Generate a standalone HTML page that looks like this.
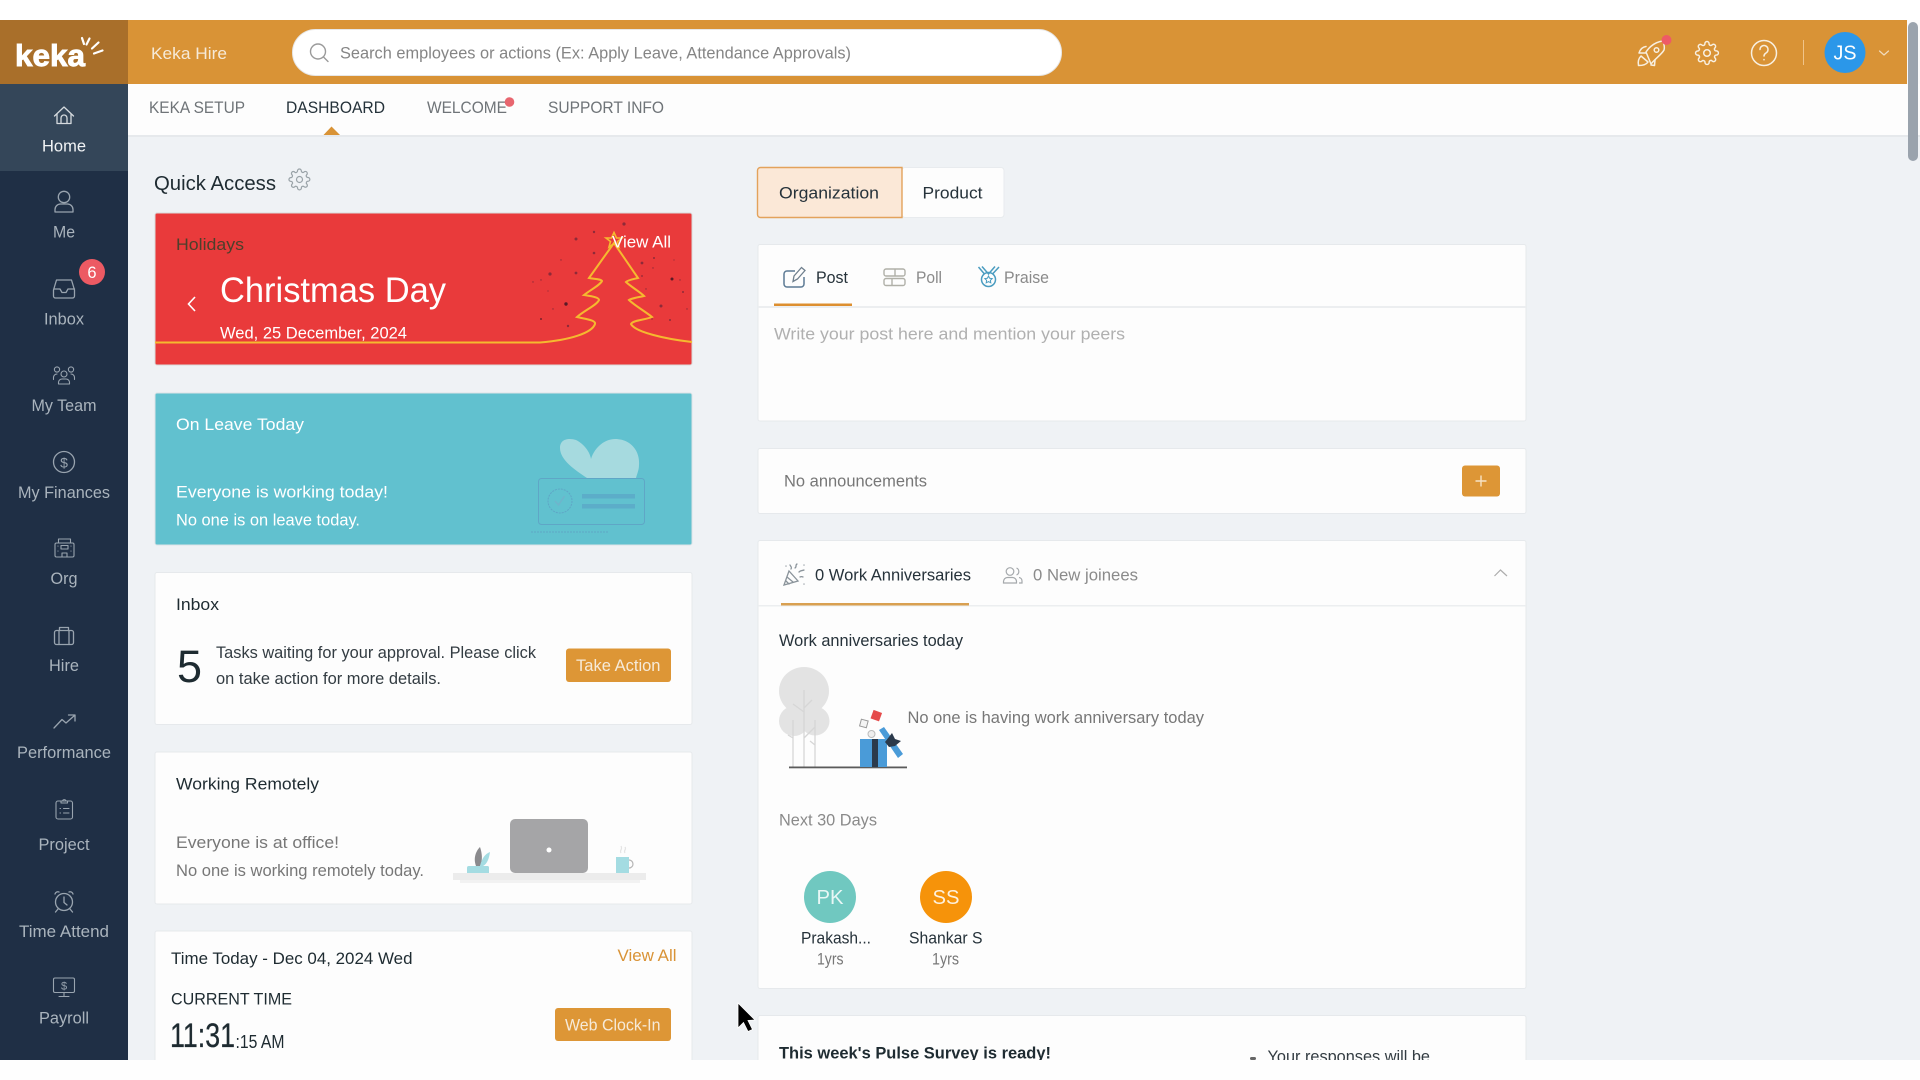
<!DOCTYPE html>
<html lang="en">
<head>
<meta charset="utf-8">
<title>Keka Dashboard</title>
<style>
html,body{margin:0;padding:0;background:#fff;width:1920px;height:1080px;overflow:hidden}
svg{display:block}
text{font-family:"Liberation Sans",sans-serif;font-size:16.5px;fill:#26323a}
.nav{fill:#aab4bd;text-anchor:middle}
.ic{fill:none;stroke:#99a4af;stroke-width:1.3;stroke-linecap:round;stroke-linejoin:round}
.g{fill:#777}
.w{fill:#fff}
.hw{fill:#f6ead8}
.tab{fill:#6f7478}
.st{fill:#8f2a38}
</style>
</head>
<body>
<svg xmlns="http://www.w3.org/2000/svg" width="1920" height="1080" viewBox="0 0 1920 1080">
<defs>
<path id="gear" d="M19.4 15a1.65 1.65 0 0 0 .33 1.82l.06.06a2 2 0 0 1 0 2.83 2 2 0 0 1-2.83 0l-.06-.06a1.65 1.65 0 0 0-1.82-.33 1.65 1.65 0 0 0-1 1.51V21a2 2 0 0 1-2 2 2 2 0 0 1-2-2v-.09A1.65 1.65 0 0 0 9 19.4a1.65 1.65 0 0 0-1.82.33l-.06.06a2 2 0 0 1-2.83 0 2 2 0 0 1 0-2.83l.06-.06a1.65 1.65 0 0 0 .33-1.82 1.65 1.65 0 0 0-1.51-1H3a2 2 0 0 1-2-2 2 2 0 0 1 2-2h.09A1.65 1.65 0 0 0 4.6 9a1.65 1.65 0 0 0-.33-1.82l-.06-.06a2 2 0 0 1 0-2.83 2 2 0 0 1 2.83 0l.06.06a1.65 1.65 0 0 0 1.82.33H9a1.65 1.65 0 0 0 1-1.51V3a2 2 0 0 1 2-2 2 2 0 0 1 2 2v.09a1.65 1.65 0 0 0 1 1.51 1.65 1.65 0 0 0 1.82-.33l.06-.06a2 2 0 0 1 2.83 0 2 2 0 0 1 0 2.83l-.06.06a1.65 1.65 0 0 0-.33 1.82V9a1.65 1.65 0 0 0 1.51 1H21a2 2 0 0 1 2 2 2 2 0 0 1-2 2h-.09a1.65 1.65 0 0 0-1.51 1z"/>
</defs>

<!-- page background -->
<rect x="0" y="20" width="1920" height="1040" fill="#eff2f5"/>

<!-- header -->
<rect x="128" y="20" width="1779" height="64" fill="#d99336"/>
<rect x="1907" y="20" width="13" height="115" fill="#fbfbfb"/>
<rect x="0" y="20" width="128" height="64" fill="#a96f2a"/>
<text x="15" y="66" class="w" style="font-size:31px;font-weight:700;stroke:#fff;stroke-width:.9" textLength="70" lengthAdjust="spacingAndGlyphs">keka</text>
<g stroke="#fff" stroke-width="2.200" stroke-linecap="round" fill="none">
<path d="M82 38L84 44"/><path d="M89.500 38.500L86.500 44.500"/><path d="M98.500 42.500L92 48.500"/><path d="M102.500 50.500L94 53.500"/>
</g>
<text x="151" y="59" class="hw" textLength="76" lengthAdjust="spacingAndGlyphs">Keka Hire</text>
<rect x="292.500" y="29.500" width="769" height="46" rx="23" fill="#fff" stroke="#e7e7e7"/>
<g fill="none" stroke="#9a9a9a" stroke-width="1.400" stroke-linecap="round"><circle cx="318" cy="51.500" r="7.500"/><path d="M323.500 57L328 61.500"/></g>
<text x="340" y="58.500" style="fill:#858585" textLength="511" lengthAdjust="spacingAndGlyphs">Search employees or actions (Ex: Apply Leave, Attendance Approvals)</text>

<!-- header right icons -->
<g fill="none" stroke="#f8efe0" stroke-width="1.500" stroke-linecap="round" stroke-linejoin="round">
<path d="M1663 41C1655 42 1650 46 1646 52L1651 64C1655 59 1662 54 1664 50C1665 47 1664 44 1663 41Z"/>
<circle cx="1656.500" cy="50" r="2.300"/>
<path d="M1646 46.500C1642 47 1640 50 1639 53L1646 53"/>
<path d="M1641 56C1638 59 1638 63 1638.500 65.500C1642 65.500 1646 65 1648 62Z"/>
<path d="M1655 60L1654.500 65.500L1651 65"/>
<use href="#gear" transform="translate(1694.500 40.500) scale(1.040)" style="stroke-width:1.400"/>
<circle cx="1707" cy="53" r="3.300"/>
<circle cx="1764" cy="53" r="12.500"/>
<path d="M1760 49.500a4 4 0 1 1 6 3.500c-1.300.8-2 1.500-2 3"/>
<path d="M1764 59.500v.2"/>
<path d="M1879.500 51l4.500 4 4.500-4" stroke-width="1.200" opacity=".8"/>
</g>
<circle cx="1666.500" cy="40" r="5" fill="#ee5a66"/>
<rect x="1803" y="40" width="1" height="25" fill="#f0c48a"/>
<circle cx="1845" cy="52.500" r="20.500" fill="#2b97e9"/>
<text x="1845" y="59.500" text-anchor="middle" class="w" style="font-size:20px" textLength="23" lengthAdjust="spacingAndGlyphs">JS</text>

<!-- tab bar -->
<rect x="128" y="84" width="1792" height="51" fill="#fdfdfd"/>
<rect x="128" y="135" width="1792" height="2" fill="#e6e9ec"/>
<text x="149" y="113" class="tab" textLength="96" lengthAdjust="spacingAndGlyphs">KEKA SETUP</text>
<text x="286" y="113" style="fill:#25323a" textLength="99" lengthAdjust="spacingAndGlyphs">DASHBOARD</text>
<text x="427" y="113" class="tab" textLength="80" lengthAdjust="spacingAndGlyphs">WELCOME</text>
<circle cx="509.500" cy="102" r="4.800" fill="#e8666f"/>
<text x="548" y="113" class="tab" textLength="116" lengthAdjust="spacingAndGlyphs">SUPPORT INFO</text>
<path d="M323.500 135L331.500 126.500L340 135Z" fill="#d99336"/>

<!-- sidebar -->
<rect x="0" y="84" width="128" height="976" fill="#1f2f45"/>
<rect x="0" y="84" width="128" height="87" fill="#344659"/>

<g class="ic" style="stroke:#d5dade"><path d="M54.500 116L64 107L73.500 116M57 113.500V123.500H71V113.500M61 123.500V118a3 3 0 0 1 6 0V123.500"/></g>
<text x="64" y="151.500" class="nav" style="fill:#f1f3f5" textLength="44" lengthAdjust="spacingAndGlyphs">Home</text>

<g class="ic"><circle cx="64" cy="197" r="5.700"/><path d="M55 212v-2.500a5.500 5.500 0 0 1 5.500-5.500h7a5.500 5.500 0 0 1 5.500 5.500v2.500z"/></g>
<text x="64" y="237.500" class="nav" textLength="22" lengthAdjust="spacingAndGlyphs">Me</text>

<g class="ic"><path d="M56.500 280H71.500L74.500 290V296a2 2 0 0 1-2 2H55.500a2 2 0 0 1-2-2V290Z"/><path d="M54 289H60L62 292.500H66L68 289H74.500"/></g>
<circle cx="92" cy="272" r="13" fill="#ec5a63"/>
<text x="92" y="278" text-anchor="middle" class="w" style="font-size:16.500px">6</text>
<text x="64" y="324.500" class="nav" textLength="40" lengthAdjust="spacingAndGlyphs">Inbox</text>

<g class="ic" style="stroke-width:1.100"><circle cx="57" cy="369.500" r="2.600"/><circle cx="71" cy="369.500" r="2.600"/><circle cx="64" cy="374" r="3"/><path d="M53.500 379.500v-2a3.500 3.500 0 0 1 3.500-3.500M74.500 379.500v-2a3.500 3.500 0 0 0-3.500-3.500M58.500 384v-1.500a3.500 3.500 0 0 1 3.500-3.500h4a3.500 3.500 0 0 1 3.500 3.500V384z"/></g>
<text x="64" y="411" class="nav" textLength="65" lengthAdjust="spacingAndGlyphs">My Team</text>

<g class="ic"><circle cx="64" cy="462" r="10.500"/></g>
<text x="64" y="467.500" text-anchor="middle" style="font-size:14px;fill:#99a4af">$</text>
<text x="64" y="498" class="nav" textLength="92" lengthAdjust="spacingAndGlyphs">My Finances</text>

<g class="ic" style="stroke-width:1.100"><rect x="55" y="543" width="19" height="14" rx="1.500"/><rect x="58.500" y="539" width="12" height="4"/><rect x="61" y="545.500" width="7" height="3.500"/><path d="M58 546v.1M71 546v.1M58 551v.1M71 551v.1M62 557v-4h5v4"/></g>
<text x="64" y="584" class="nav" textLength="27" lengthAdjust="spacingAndGlyphs">Org</text>

<g class="ic"><rect x="54.500" y="630.500" width="19" height="14" rx="2"/><path d="M59 644.500V630.500M69 644.500V630.500M59.500 630.500V627.500H68.500V630.500"/></g>
<text x="64" y="671" class="nav" textLength="30" lengthAdjust="spacingAndGlyphs">Hire</text>

<g class="ic"><path d="M54 728L62 719.500L66 723L74.500 715.500M68.500 715H75V721"/></g>
<text x="64" y="758" class="nav" textLength="94" lengthAdjust="spacingAndGlyphs">Performance</text>

<g class="ic" style="stroke-width:1.100"><rect x="56" y="801" width="16.500" height="18" rx="2"/><path d="M61 803V801H62.500a1.800 1.800 0 0 1 3.500 0H67.500V803H61Z"/><path d="M60 808.500H60.500M63.500 808.500H69M60 813H60.500M63.500 813H69"/></g>
<text x="64" y="850" class="nav" textLength="51" lengthAdjust="spacingAndGlyphs">Project</text>

<g class="ic"><circle cx="64" cy="902" r="8.500"/><path d="M64 897V902.500L67 905M55 894a3 3 0 0 1 4-2M73 894a3 3 0 0 0-4-2M58 909L55.500 912M70 909L72.500 912"/></g>
<text x="64" y="937" class="nav" textLength="90" lengthAdjust="spacingAndGlyphs">Time Attend</text>

<g class="ic" style="stroke-width:1.100"><rect x="53.500" y="978" width="21" height="14.500" rx="1.500"/><path d="M64 992.500V996.500M59 996.500H69"/></g>
<text x="64" y="989.500" text-anchor="middle" style="font-size:11px;fill:#99a4af">$</text>
<text x="64" y="1023.500" class="nav" textLength="50" lengthAdjust="spacingAndGlyphs">Payroll</text>

<!-- Quick access -->
<text x="154" y="190" style="font-size:20px;fill:#1e2b31" textLength="122" lengthAdjust="spacingAndGlyphs">Quick Access</text>
<use href="#gear" transform="translate(288 168) scale(.95)" fill="none" stroke="#9aa3a8" stroke-width="1.300"/>
<circle cx="299.500" cy="179.500" r="3" fill="none" stroke="#9aa3a8" stroke-width="1.200"/>

<!-- Holidays -->
<rect x="155" y="213" width="537" height="152" rx="2" fill="#e93a3b" stroke="#d9d9d9"/>
<g class="st">
<circle cx="624" cy="224" r="1.600"/><circle cx="594" cy="232" r="1.200"/><circle cx="576" cy="239" r="1.500"/><circle cx="594" cy="253" r="1.300"/><circle cx="561" cy="260" r=".7"/><circle cx="550" cy="274" r="1.600"/><circle cx="576" cy="273" r="1.400"/><circle cx="533" cy="282" r=".7"/><circle cx="541" cy="280" r=".7"/><circle cx="548" cy="291" r=".6"/><circle cx="566" cy="304" r="1.700" style="fill:#5a1a26"/><circle cx="553" cy="309" r=".7"/><circle cx="541" cy="319" r=".9" style="fill:#5a1a26"/><circle cx="568" cy="326" r="1.200"/><circle cx="642" cy="263" r="1.400"/><circle cx="654" cy="258" r="1"/><circle cx="653" cy="268" r=".7"/><circle cx="642" cy="276" r=".9"/><circle cx="672" cy="279" r="1.500" style="fill:#5a1a26"/><circle cx="680" cy="280" r=".7"/><circle cx="674" cy="260" r=".6"/><circle cx="683" cy="292" r="1"/><circle cx="646" cy="289" r=".7"/><circle cx="661" cy="306" r="1.500"/><circle cx="687" cy="309" r=".7"/><circle cx="670" cy="320" r="1"/><circle cx="652" cy="319" r=".7"/>
</g>
<path d="M155 342.500L540 342.500C570 340 592 333 595 324C596 320 585 319 577 317C585 310 597 305 599 300C599 297 590 296 584 295C592 289 600 285 602 281C601 279 594 279 589 278L614 243L638 278C634 279 628 280 626 282C630 286 640 292 644 296C640 297 632 298 629 300C634 305 646 312 652 317C645 320 633 320 631 324C635 332 665 339 692 342" fill="none" stroke="#f5b92f" stroke-width="2"/>
<path d="M614 232.500L616.500 238H622L617.500 241.500L619 247L614 243.500L609 247L610.500 241.500L606 238H611.500Z" fill="none" stroke="#f5b92f" stroke-width="1.600"/>
<text x="176" y="250" style="fill:#4d3f2b" textLength="68" lengthAdjust="spacingAndGlyphs">Holidays</text>
<text x="612" y="247.500" class="w" textLength="59" lengthAdjust="spacingAndGlyphs">View All</text>
<text x="220" y="302" class="w" style="font-size:35px" textLength="226" lengthAdjust="spacingAndGlyphs">Christmas Day</text>
<text x="220" y="338.500" class="w" textLength="187" lengthAdjust="spacingAndGlyphs">Wed, 25 December, 2024</text>
<path d="M195 297L188.500 304L195 311" fill="none" stroke="#fff" stroke-width="1.600"/>

<!-- On leave -->
<rect x="155" y="393" width="537" height="152" rx="2" fill="#61c1cf" stroke="#dce3e6"/>
<path d="M587 478C575 470 560 460 560 448C560 438 570 438 576 440C584 444 590 452 591 459C595 446 606 439 615 439C630 439 640 450 639 465C639 470 637 474 636 478Z" fill="#a6dadf"/>
<rect x="538.500" y="478.500" width="106" height="46" rx="3" fill="none" stroke="#5fa6c6"/>
<circle cx="560" cy="501" r="12" fill="none" stroke="#5fa6c6" stroke-dasharray="2 1"/>
<path d="M555 501l3.500 4 6-9" fill="none" stroke="#6fb4cc" stroke-width="1.500"/>
<rect x="582" y="494" width="53" height="4.500" fill="#5cadc9"/>
<rect x="582" y="504" width="53" height="4.500" fill="#5cadc9"/>
<path d="M531 532H609" stroke="#5fa6c6" stroke-dasharray="2 1" fill="none"/>
<text x="176" y="430" class="w" textLength="128" lengthAdjust="spacingAndGlyphs">On Leave Today</text>
<text x="176" y="497.500" class="w" textLength="212" lengthAdjust="spacingAndGlyphs">Everyone is working today!</text>
<text x="176" y="525.500" class="w" textLength="184" lengthAdjust="spacingAndGlyphs">No one is on leave today.</text>

<!-- Inbox card -->
<rect x="155" y="572.500" width="537" height="152" rx="2" fill="#fdfdfd" stroke="#e6e9ec"/>
<text x="176" y="610" style="fill:#1e2b31" textLength="43" lengthAdjust="spacingAndGlyphs">Inbox</text>
<text x="177" y="682" style="font-size:45px;fill:#1e2b31" textLength="25" lengthAdjust="spacingAndGlyphs">5</text>
<text x="216" y="658" style="fill:#333c42" textLength="320" lengthAdjust="spacingAndGlyphs">Tasks waiting for your approval. Please click</text>
<text x="216" y="684" style="fill:#333c42" textLength="225" lengthAdjust="spacingAndGlyphs">on take action for more details.</text>
<rect x="566" y="648.500" width="105" height="33.500" rx="3" fill="#dd9636"/>
<text x="576" y="671" class="hw" textLength="84.500" lengthAdjust="spacingAndGlyphs">Take Action</text>

<!-- Working remotely -->
<rect x="155" y="752" width="537" height="152" rx="2" fill="#fdfdfd" stroke="#e6e9ec"/>
<text x="176" y="789.500" style="fill:#1e2b31" textLength="143" lengthAdjust="spacingAndGlyphs">Working Remotely</text>
<text x="176" y="848" class="g" textLength="163" lengthAdjust="spacingAndGlyphs">Everyone is at office!</text>
<text x="176" y="876" class="g" textLength="248" lengthAdjust="spacingAndGlyphs">No one is working remotely today.</text>
<rect x="453" y="873" width="193" height="7" fill="#ececec"/>
<rect x="460" y="880" width="180" height="3" fill="#f2f2f2"/>
<rect x="510" y="819" width="78" height="54" rx="5" fill="#a5a5a7"/>
<circle cx="549" cy="850" r="2.500" fill="#fff"/>
<path d="M467 873V868C467 866 468 866 470 866H487C489 866 489 867 489 868V873Z" fill="#a4dce2"/>
<path d="M476 866C473 858 476 851 480 847C482 853 483 860 480 866Z" fill="#8a8a8d"/>
<path d="M480 866C482 858 485 854 490 852C489 859 487 864 483 866Z" fill="#a4dce2"/>
<rect x="616" y="857" width="13" height="16" fill="#a4dce2"/>
<path d="M629 860a3.500 3.500 0 0 1 0 8" fill="none" stroke="#b5b5b5" stroke-width="1.200"/>
<path d="M621 853c-2-3 2-3 0-7M625 853c-2-3 2-3 0-6" fill="none" stroke="#e4e4e4" stroke-width="1.200"/>

<!-- Time today -->
<rect x="155" y="931" width="537" height="160" rx="2" fill="#fdfdfd" stroke="#e6e9ec"/>
<text x="171" y="964" style="fill:#1e2b31" textLength="241.500" lengthAdjust="spacingAndGlyphs">Time Today - Dec 04, 2024 Wed</text>
<text x="617.500" y="961" style="fill:#d99336" textLength="59" lengthAdjust="spacingAndGlyphs">View All</text>
<text x="171" y="1004.500" style="fill:#1e2b31" textLength="121" lengthAdjust="spacingAndGlyphs">CURRENT TIME</text>
<text x="170" y="1047" style="font-size:34px;fill:#1e2b31;stroke:#1e2b31;stroke-width:.3" textLength="65" lengthAdjust="spacingAndGlyphs">11:31</text>
<text x="235.500" y="1048" style="font-size:18px;fill:#1e2b31" textLength="49" lengthAdjust="spacingAndGlyphs">:15 AM</text>
<rect x="555" y="1008" width="116" height="33" rx="3" fill="#dd9636"/>
<text x="565" y="1030.500" class="hw" textLength="95.500" lengthAdjust="spacingAndGlyphs">Web Clock-In</text>

<!-- Organization / Product -->
<rect x="902" y="167.500" width="102" height="50" rx="3" fill="#fdfdfd" stroke="#e8ebee"/>
<path d="M902 167.500H760.500a3 3 0 0 0-3 3V214.500a3 3 0 0 0 3 3H902Z" fill="#fbe8d7" stroke="#e3a25b" stroke-width="1.400"/>
<text x="779" y="198.500" style="fill:#26323a" textLength="100" lengthAdjust="spacingAndGlyphs">Organization</text>
<text x="922.500" y="198.500" style="fill:#26323a" textLength="60" lengthAdjust="spacingAndGlyphs">Product</text>

<!-- Post card -->
<rect x="758" y="244.500" width="768" height="176.500" rx="2" fill="#fdfdfd" stroke="#e6e9ec"/>
<rect x="758" y="306" width="768" height="2" fill="#eceef0"/>
<rect x="774" y="303.500" width="78" height="2.500" fill="#dd8f30"/>
<path d="M795 271H787a3 3 0 0 0-3 3V284a3 3 0 0 0 3 3H801a3 3 0 0 0 3-3V277" fill="none" stroke="#5c7a94" stroke-width="1.500"/>
<path d="M793 281.500L794 276L801.500 267.500L805 270.500L797.500 279Z" fill="none" stroke="#6f7f8d" stroke-width="1.300"/>
<text x="816" y="283" style="fill:#26323a" textLength="32" lengthAdjust="spacingAndGlyphs">Post</text>
<g fill="none" stroke="#b0b0a8" stroke-width="1.400"><rect x="884" y="269" width="21" height="7" rx="2"/><rect x="884" y="278.500" width="21" height="7" rx="2"/><path d="M895 269V276M892 278.500V285.500"/></g>
<text x="916" y="283" style="fill:#8a8a8a" textLength="26" lengthAdjust="spacingAndGlyphs">Poll</text>
<g fill="none" stroke="#4a9cc0" stroke-width="1.500"><circle cx="988.500" cy="279.500" r="7"/><path d="M978.500 267L984 273.500M999 267L993 273.500M982 266.500L988.500 274L995 266.500"/><path d="M988.500 276l1.200 2.300 2.500.3-1.800 1.700.4 2.500-2.300-1.200-2.300 1.200.4-2.500-1.800-1.700 2.500-.3z" stroke-width="1"/></g>
<text x="1004" y="283" style="fill:#8a8a8a" textLength="45" lengthAdjust="spacingAndGlyphs">Praise</text>
<text x="774" y="339.500" style="fill:#b0b0b0" textLength="351" lengthAdjust="spacingAndGlyphs">Write your post here and mention your peers</text>

<!-- Announcements -->
<rect x="758" y="448.500" width="768" height="65" rx="2" fill="#fdfdfd" stroke="#e6e9ec"/>
<text x="784" y="486.500" class="g" textLength="143" lengthAdjust="spacingAndGlyphs">No announcements</text>
<rect x="1462" y="465.500" width="38" height="31" rx="3" fill="#dd9636"/>
<path d="M1481 475.500V486.500M1475.500 481H1486.500" stroke="#f7e3c5" stroke-width="1.400"/>

<!-- Anniversaries -->
<rect x="758" y="540.500" width="768" height="448" rx="2" fill="#fdfdfd" stroke="#e6e9ec"/>
<rect x="758" y="605" width="768" height="1.500" fill="#eceef0"/>
<rect x="781" y="603" width="188" height="2.500" fill="#d9a051"/>
<g fill="none" stroke="#8a939a" stroke-width="1.300" stroke-linecap="round">
<path d="M784 585L789 571L798 581Z"/><path d="M787 577L793 582M786 581L789 584"/>
<path d="M790 565c1 2 2 2 1 4M795 568c2-1 0-3 2-4M799 572c2-2 3-1 5-2M800 577c1-.5 2-.5 3 0M786 566v.1M804 565v.1M804 584v.1"/>
</g>
<text x="815" y="580.500" style="fill:#26323a" textLength="156" lengthAdjust="spacingAndGlyphs">0 Work Anniversaries</text>
<g fill="none" stroke="#a5a9ac" stroke-width="1.200"><circle cx="1010" cy="571.500" r="3.800"/><path d="M1016.500 568a3.800 3.800 0 0 1 0 7"/><path d="M1003.500 583v-1.500a4 4 0 0 1 4-4h5a4 4 0 0 1 4 4V583zM1019 577.500a3.500 3.500 0 0 1 3 3.500v2h-3"/></g>
<text x="1033" y="580.500" style="fill:#8a8a8a" textLength="105" lengthAdjust="spacingAndGlyphs">0 New joinees</text>
<path d="M1494.500 576L1500.500 570L1507 576" fill="none" stroke="#adadad" stroke-width="1.200"/>
<text x="779" y="646" style="fill:#26323a" textLength="184" lengthAdjust="spacingAndGlyphs">Work anniversaries today</text>

<g fill="#e3e3e3"><ellipse cx="804" cy="691" rx="25" ry="24"/><circle cx="794" cy="721" r="15"/><circle cx="815" cy="721" r="14.500"/></g>
<g stroke="#d6d6d6" stroke-width="1.300" fill="none"><path d="M804 690V767M793 720V767M815 720V767M804 712L793 704M804 708L812 700M793 738L788 735M804 738L815 727M815 745L810 741"/></g>
<rect x="789" y="766.500" width="118" height="1.800" fill="#5b5b5b"/>
<rect x="860" y="739" width="27" height="28" fill="#4a9bd8"/>
<rect x="872" y="739" width="6" height="28" fill="#2b3a4b"/>
<path d="M879 730L884 727L903 754L898 758Z" fill="#4a9bd8"/>
<path d="M885 742L892 733L895 739L901 741L895 746L889 747Z" fill="#2b3a4b"/>
<rect x="872" y="711" width="9" height="9" transform="rotate(20 876 715)" fill="#e54b4b"/>
<rect x="860.500" y="720" width="7" height="7" transform="rotate(15 864 723)" fill="#f4f4f4" stroke="#999"/>
<circle cx="871.500" cy="734" r="3.500" fill="#eee" stroke="#bbb"/>
<text x="907.500" y="723" class="g" textLength="296.500" lengthAdjust="spacingAndGlyphs">No one is having work anniversary today</text>
<text x="779" y="825.500" style="fill:#8a8a8a" textLength="98" lengthAdjust="spacingAndGlyphs">Next 30 Days</text>
<circle cx="830" cy="897" r="26" fill="#70c8c0"/>
<circle cx="946" cy="897" r="26" fill="#f6930a"/>
<text x="830" y="904" text-anchor="middle" style="font-size:20px;fill:#e8f7f5" textLength="27" lengthAdjust="spacingAndGlyphs">PK</text>
<text x="946" y="904" text-anchor="middle" style="font-size:20px;fill:#fdf0dc" textLength="27" lengthAdjust="spacingAndGlyphs">SS</text>
<text x="801" y="943.500" style="fill:#26323a" textLength="70" lengthAdjust="spacingAndGlyphs">Prakash...</text>
<text x="909" y="943.500" style="fill:#26323a" textLength="73.500" lengthAdjust="spacingAndGlyphs">Shankar S</text>
<text x="817" y="964.500" class="g" textLength="26.500" lengthAdjust="spacingAndGlyphs">1yrs</text>
<text x="932" y="964.500" class="g" textLength="27" lengthAdjust="spacingAndGlyphs">1yrs</text>

<!-- Pulse -->
<rect x="758" y="1015.500" width="768" height="80" rx="2" fill="#fdfdfd" stroke="#e6e9ec"/>
<text x="779" y="1058.500" style="font-size:17px;font-weight:700;fill:#1e2b31" textLength="272" lengthAdjust="spacingAndGlyphs">This week's Pulse Survey is ready!</text>
<rect x="1250" y="1057" width="6" height="3" rx="1.500" fill="#666"/>
<text x="1267.500" y="1062" style="fill:#333c42" textLength="162.500" lengthAdjust="spacingAndGlyphs">Your responses will be</text>

<!-- bottom white band -->
<rect x="0" y="1060" width="1920" height="20" fill="#fefefe"/>

<!-- scrollbar -->
<rect x="1908" y="22" width="10" height="139" rx="5" fill="#9aa3ad"/>

<!-- cursor -->
<path d="M738 1003L738 1028L743.500 1022.500L748 1031.500L752.500 1029.500L748 1020.500L755 1020Z" fill="#000" stroke="#fff" stroke-width=".8"/>
</svg>
</body>
</html>
